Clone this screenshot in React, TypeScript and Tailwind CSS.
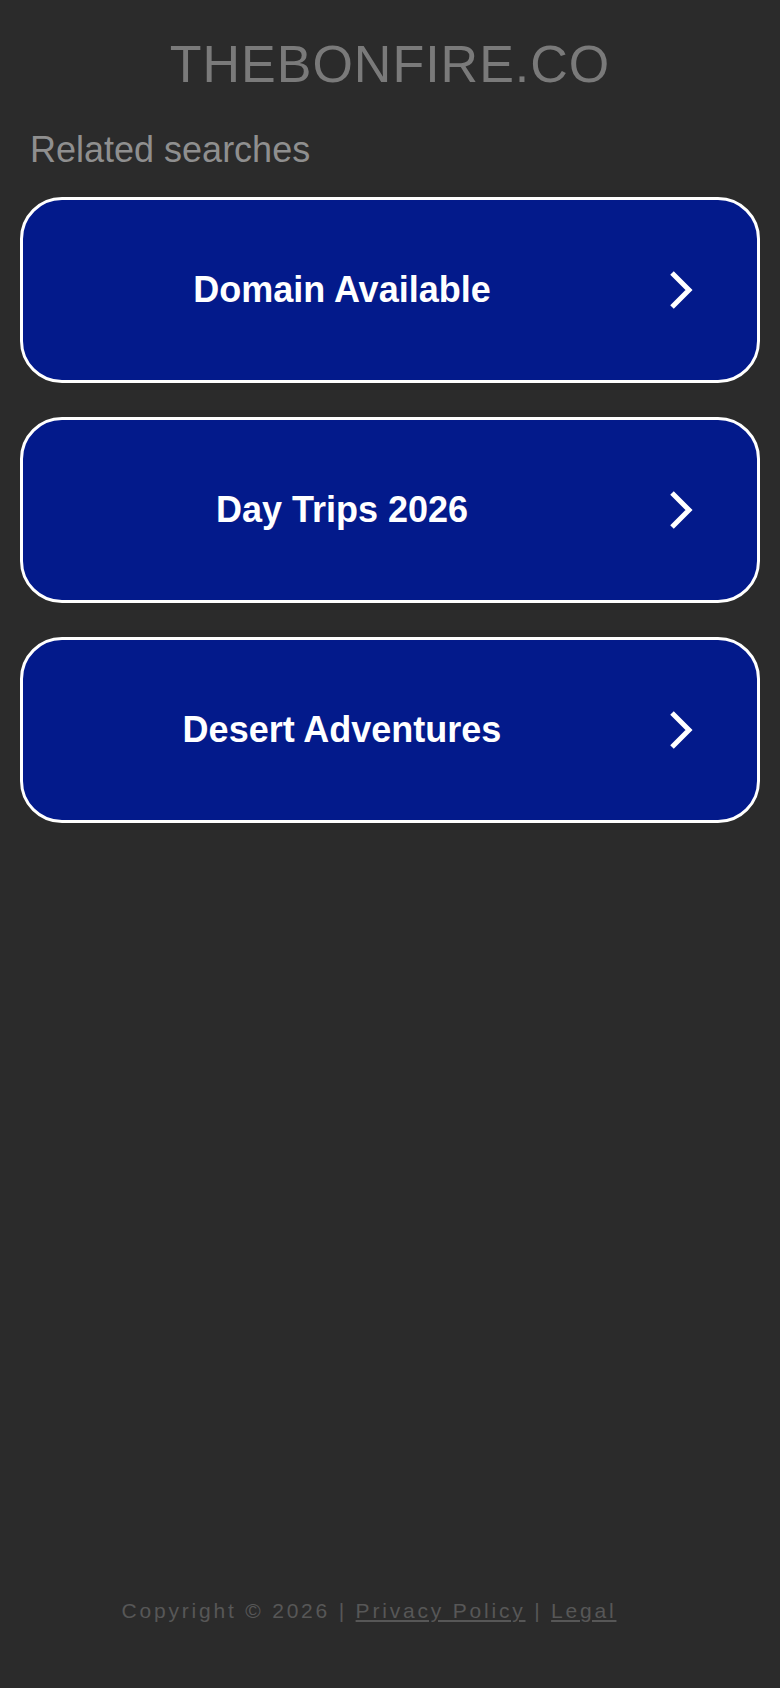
const searches = ['Domain Available', 'Day Trips 2026', 'Desert Adventures'];

function Chevron() {
  return (
    <svg
      viewBox="0 0 24 38"
      className="ml-[8px] mr-[64px] h-[38px] w-[24px] shrink-0"
      fill="none"
      stroke="#ffffff"
      strokeWidth="5"
      strokeLinejoin="miter"
      aria-hidden
    >
      <path d="M3 2 L20 19 L3 36" />
    </svg>
  );
}

function SearchCard({ label }: { label: string }) {
  return (
    <a
      href="#"
      className="flex h-[186px] items-center rounded-[42px] border-[3px] border-white bg-[#031a8b] no-underline"
    >
      <span className="flex-1 text-center text-[36px] font-bold leading-none text-white">{label}</span>
      <Chevron />
    </a>
  );
}

export default function App() {
  return (
    <div className="flex min-h-[1688px] flex-col bg-[#2b2b2b] font-['Liberation_Sans',Arial,sans-serif]">
      <h1 className="pt-[38px] text-center text-[52px] font-normal leading-none tracking-[1px] text-[#7a7a7a]">
        THEBONFIRE.CO
      </h1>

      <h2 className="mt-[42px] pl-[30px] text-[36px] font-normal leading-none text-[#8f8f8f]">Related searches</h2>

      <div className="mt-[29px] flex flex-col gap-[34px] px-[20px]">
        {searches.map((s) => (
          <SearchCard key={s} label={s} />
        ))}
      </div>

      <footer className="mt-auto pb-[67px] pr-[42px] text-center text-[21px] leading-none tracking-[2.8px] text-[#575757]">
        Copyright © 2026 |{' '}
        <a href="#" className="underline">
          Privacy Policy
        </a>{' '}
        |{' '}
        <a href="#" className="underline">
          Legal
        </a>
      </footer>
    </div>
  );
}
